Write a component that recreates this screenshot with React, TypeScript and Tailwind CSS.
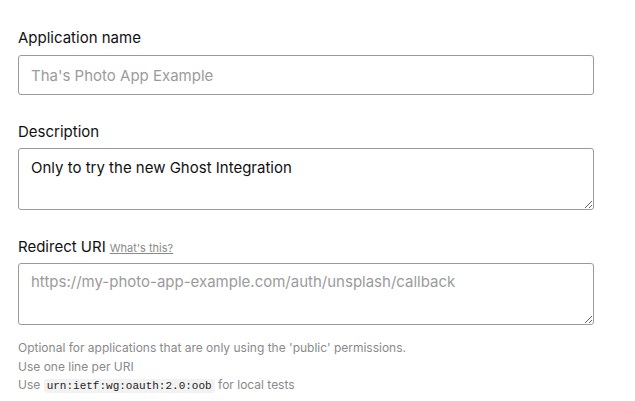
import React from 'react';

const App: React.FC = () => {
  return (
    <div className="min-h-screen bg-white font-['Inter','Helvetica_Neue',sans-serif] text-[#111]">
      <div className="w-[576px] ml-[18px] pt-[29px]">
        <div>
          <label className="block text-[15px] leading-[18px] mb-[8px]">Application name</label>
          <input
            type="text"
            placeholder="Tha's Photo App Example"
            className="block w-full h-[40px] px-[12px] border border-[#9a9a9a] rounded-[3px] text-[15px] placeholder:text-[#9b9b9b] outline-none"
          />
        </div>

        <div className="mt-[28px]">
          <label className="block text-[15px] leading-[18px] mb-[7px]">Description</label>
          <textarea
            defaultValue="Only to try the new Ghost Integration"
            className="block w-full h-[62px] px-[12px] py-[9px] border border-[#9a9a9a] rounded-[3px] text-[15px] leading-[20px] text-[#111] outline-none"
          />
        </div>

        <div className="mt-[28px]">
          <label className="flex items-baseline gap-[4px] text-[15px] leading-[18px] mb-[7px]">
            Redirect URI
            <a href="#" className="text-[11px] leading-none text-[#8a8a8a] underline">What's this?</a>
          </label>
          <textarea
            placeholder="https://my-photo-app-example.com/auth/unsplash/callback"
            className="block w-full h-[62px] px-[12px] py-[8px] border border-[#9a9a9a] rounded-[3px] text-[15px] leading-[20px] placeholder:text-[#9b9b9b] outline-none"
          />
        </div>

        <div className="mt-[14px] text-[12px] leading-[18.5px] text-[#8a8a8a]">
          <p>Optional for applications that are only using the 'public' permissions.</p>
          <p>Use one line per URI</p>
          <p>
            Use{' '}
            <code className="font-['Liberation_Mono',monospace] text-[11px] text-[#222] bg-[#f2f2f2] rounded-[3px] px-[3px] py-[1px]">
              urn:ietf:wg:oauth:2.0:oob
            </code>{' '}
            for local tests
          </p>
        </div>
      </div>
    </div>
  );
};

export default App;
